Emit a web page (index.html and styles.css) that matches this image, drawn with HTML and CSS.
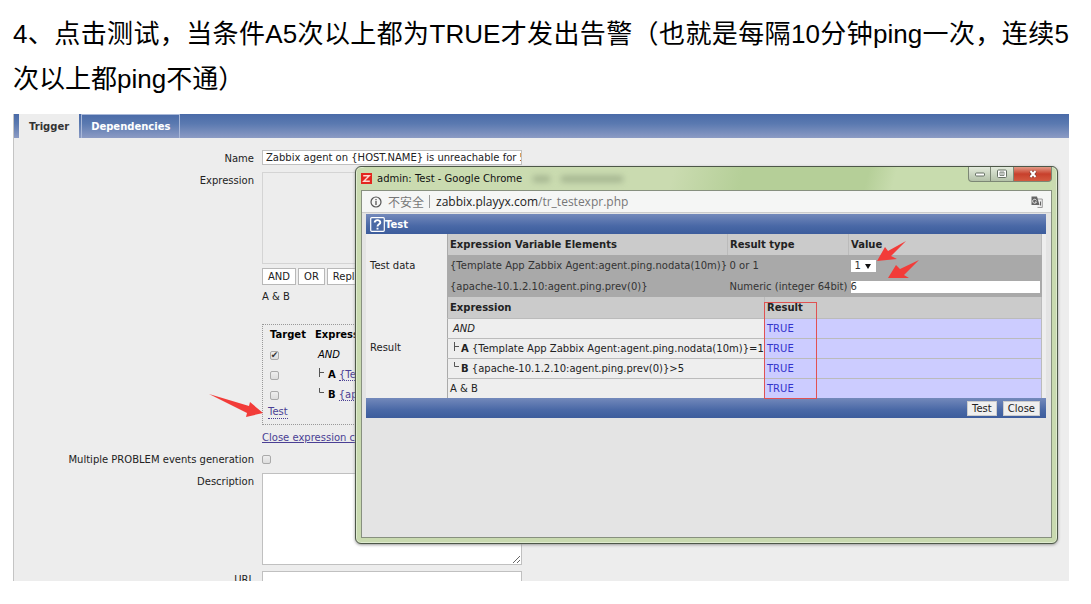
FILE: index.html
```html
<!DOCTYPE html>
<html lang="zh-CN">
<head>
<meta charset="utf-8">
<title>Zabbix 触发器测试</title>
<link rel="stylesheet" href="styles.css">
</head>
<body>
<main class="article">
  <p class="step">4、点击测试，当条件A5次以上都为TRUE才发出告警（也就是每隔10分钟ping一次，连续5次以上都ping不通）</p>
  <section class="shot">
    <nav class="tabs">
      <button class="tab tab-active" type="button">Trigger</button>
      <button class="tab" type="button">Dependencies</button>
    </nav>
    <form class="form">
      <div class="row">
        <label class="row-label" for="name">Name</label>
        <input class="field" id="name" type="text" value="Zabbix agent on {HOST.NAME} is unreachable for 5">
      </div>
      <div class="row">
        <label class="row-label" for="expression">Expression</label>
        <div class="stack">
          <textarea class="area area-readonly" id="expression" readonly></textarea>
          <div class="ops">
            <button class="op" type="button">AND</button>
            <button class="op" type="button">OR</button>
            <button class="op" type="button">Replace</button>
          </div>
          <div class="formula">A &amp; B</div>
          <div class="targets">
            <table class="target-table">
              <tr><th>Target</th><th>Expression</th></tr>
              <tr><td><input class="check" type="checkbox" aria-label="Target AND" checked></td><td><i>AND</i></td></tr>
              <tr><td><input class="check" type="checkbox" aria-label="Target A"></td><td><svg class="branch" viewBox="0 0 7 10"><path d="M1.5 0V9M1.5 4.500H6"/></svg><b>A</b> <a class="dotted" href="#">{Template</a></td></tr>
              <tr><td><input class="check" type="checkbox" aria-label="Target B"></td><td><svg class="branch" viewBox="0 0 7 10"><path d="M1.500 0V4.500H6"/></svg><b>B</b> <a class="dotted" href="#">{apache</a></td></tr>
            </table>
            <a class="dotted test-link" href="#">Test</a>
          </div>
          <a class="close-link" href="#">Close expression constructor</a>
        </div>
      </div>
      <div class="row">
        <label class="row-label" for="multi">Multiple PROBLEM events generation</label>
        <input class="check" id="multi" type="checkbox">
      </div>
      <div class="row">
        <label class="row-label" for="description">Description</label>
        <textarea class="area" id="description"></textarea>
      </div>
      <div class="row row-cut">
        <label class="row-label" for="url">URL</label>
        <input class="field" id="url" type="text">
      </div>
    </form>

    <section class="window" aria-label="admin: Test - Google Chrome">
      <header class="titlebar">
        <svg class="favicon" viewBox="0 0 10 10"><rect width="10" height="10" fill="#e3271f"/><path d="M2 2.500H7.500L2.500 7.500H8" fill="none" stroke="#ffd9d2" stroke-width="1.300"/></svg>
        <span class="title">admin: Test - Google Chrome</span>
        <span class="ghost ghost-short"></span><span class="ghost"></span>
        <div class="controls">
          <button class="control" type="button" aria-label="Minimize"><svg viewBox="0 0 12 10"><rect x="1.500" y="4" width="9" height="3" rx="1" fill="#fff" stroke="#667064"/></svg></button>
          <button class="control" type="button" aria-label="Maximize"><svg viewBox="0 0 12 10"><rect x="1.500" y="1" width="9" height="7.500" rx="1" fill="#fff" stroke="#667064"/><path d="M4 6.500V3H8V6.500ZM6 3V6" fill="none" stroke="#667064" stroke-width=".8"/></svg></button>
          <button class="control control-close" type="button" aria-label="Close window"><svg viewBox="0 0 12 10"><path d="M3.500 2 8.500 8M8.500 2 3.500 8" stroke="#7a3830" stroke-width="3.500"/><path d="M3.500 2 8.500 8M8.500 2 3.500 8" stroke="#fff" stroke-width="2"/></svg></button>
        </div>
      </header>
      <div class="viewport">
        <div class="address">
          <svg class="info" viewBox="0 0 12 12"><circle cx="6" cy="6" r="5" fill="none" stroke="#555" stroke-width="1.200"/><path d="M6 5V9M6 3V4.200" stroke="#555" stroke-width="1.300"/></svg>
          <span class="unsafe">不安全</span>
          <span class="address-text">zabbix.playyx.com<span class="path">/tr_testexpr.php</span></span>
          <svg class="translate" viewBox="0 0 12 12"><path d="M4 3H11.300V11.500H6.500" fill="#eee" stroke="#888" stroke-width=".8"/><path d="M0.500 0.500H6L8.500 9H0.500Z" fill="#666"/><path d="M5.500 4.500A2 2 0 1 0 5.500 6H4" fill="none" stroke="#eee" stroke-width=".9"/><path d="M9.500 5.500V9.500" stroke="#666" stroke-width="1" fill="none"/></svg>
        </div>
        <div class="page">
          <div class="bar"><svg class="help" viewBox="0 0 15 15"><rect x=".7" y=".7" width="13.600" height="13.600" rx="1" fill="#4a69a5" stroke="#fff" stroke-width="1.200"/><path d="M4.700 5.600C4.700 2.400 10.300 2.400 10.300 5.400C10.300 7.400 7.500 7.300 7.500 9.500M7.500 10.700V12.500" fill="none" stroke="#fff" stroke-width="1.900"/></svg>Test</div>
          <div class="panel">
            <div class="panel-row">
              <div class="panel-label">Test data</div>
              <table class="grid">
                <colgroup><col class="col-element"><col class="col-type"><col></colgroup>
                <tr><th>Expression Variable Elements</th><th>Result type</th><th>Value</th></tr>
                <tr class="dark"><td>{Template App Zabbix Agent:agent.ping.nodata(10m)}</td><td>0 or 1</td><td><div class="picker"><select class="select" aria-label="Value of nodata"><option>1</option><option>0</option></select></div></td></tr>
                <tr class="dark"><td>{apache-10.1.2.10:agent.ping.prev(0)}</td><td>Numeric (integer 64bit)</td><td><input class="value" type="text" value="6" aria-label="Value of prev"></td></tr>
              </table>
            </div>
            <div class="panel-row">
              <div class="panel-label">Result</div>
              <table class="grid results">
                <colgroup><col class="col-expression"><col></colgroup>
                <tr><th>Expression</th><th>Result</th></tr>
                <tr><td><i class="indent">AND</i></td><td class="true">TRUE</td></tr>
                <tr><td><svg class="branch" viewBox="0 0 7 10"><path d="M1.500 0V9M1.500 4.500H6"/></svg><b>A</b> {Template App Zabbix Agent:agent.ping.nodata(10m)}=1</td><td class="true">TRUE</td></tr>
                <tr><td><svg class="branch" viewBox="0 0 7 10"><path d="M1.500 0V4.500H6"/></svg><b>B</b> {apache-10.1.2.10:agent.ping.prev(0)}&gt;5</td><td class="true">TRUE</td></tr>
                <tr><td>A &amp; B</td><td class="true">TRUE</td></tr>
              </table>
            </div>
          </div>
          <div class="bar bar-foot">
            <button class="action" type="button">Test</button>
            <button class="action" type="button">Close</button>
          </div>
        </div>
      </div>
    </section>

    <svg class="marks" viewBox="0 0 1056 468" width="1056" height="468" aria-hidden="true">
      <g fill="#f23c39">
        <path d="M195 280 235 292 236 288 249 299 232 303 233 299Z"/>
        <path d="M892 127 877 142 883 145 863 147 871 133 874 137Z"/>
        <path d="M905 146 890 161 895 164 874 164 882 151 886 155Z"/>
      </g>
      <rect x="750.500" y="188.500" width="52" height="96" fill="none" stroke="#e05252"/>
    </svg>
  </section>
</main>
</body>
</html>
```
FILE: styles.css
```css
* { box-sizing: border-box; }

body {
  margin: 0;
  background: #fff;
  color: #222;
  font-family: "DejaVu Sans", "Noto Sans CJK SC", sans-serif;
  font-size: 10px;
}

button, input, select, textarea { font: inherit; color: inherit; margin: 0; }

.article { padding: 12px 22px 22px 13px; }

.step {
  margin: 0 0 12px;
  color: #000;
  font: 26px/45px "Liberation Sans", "Noto Sans CJK SC", sans-serif;
  text-align: justify;
}

.shot {
  position: relative;
  overflow: hidden;
  background: #ededed;
  border-left: 1px solid #c4c4c4;
}

.tabs {
  display: flex;
  height: 24px;
  padding-left: 5px;
  background: linear-gradient(#4a6ba8, #5a79b0 40%, #8c9bc4);
}
.tab {
  padding: 0 9px;
  border: 1px solid #a9b8d8;
  border-width: 1px 1px 0;
  background: none;
  color: #fff;
  font-weight: bold;
}
.tab-active {
  margin-right: 2px;
  background: #ededed;
  border-color: #ededed;
  color: #333;
}

.form { display: flex; flex-direction: column; gap: 6px; padding-top: 12px; }
.row { display: grid; grid-template-columns: 240px 260px; column-gap: 8px; }
.row-label { padding-top: 2px; text-align: right; line-height: 14px; }
.field, .area {
  width: 100%;
  border: 1px solid #c0c0c0;
  border-radius: 0;
  background: #fff;
  outline: none;
}
.field { height: 15px; padding: 0 0 0 3px; }
.area { display: block; height: 92px; padding: 2px; }
.area-readonly { background: #ededed; border-color: #d4d4d4; resize: none; }
.row-cut { height: 10px; overflow: hidden; }
.stack { display: flex; flex-direction: column; }
.ops { display: flex; gap: 2px; margin-top: 4px; }
.op {
  height: 17px;
  padding: 0 5px;
  border: 1px solid #b8b8b8;
  background: #fff;
}
.formula { margin-top: 5px; line-height: 14px; }
.targets {
  margin-top: 20px;
  padding: 0 5px 5px;
  border: 1px dotted #999;
  line-height: 14px;
}
.target-table { border-collapse: collapse; color: #000; }
.target-table th, .target-table td { height: 20px; padding: 0 10px 0 2px; text-align: left; white-space: nowrap; }
.target-table th { padding-right: 7px; }
.target-table i { padding-left: 3px; }
.target-table .branch { margin-right: 3px; }
.check {
  appearance: none;
  width: 9px;
  height: 9px;
  border: 1px solid #aaa;
  border-radius: 2px;
  background: linear-gradient(#eee, #ddd);
  display: grid;
  place-content: center;
}
.row > .check { align-self: center; }
.check:checked::before { content: "✔"; color: #333; font-size: 9px; line-height: 9px; }
a { color: #4a3f94; }
.dotted { text-decoration: none; border-bottom: 1px dotted #4a3f94; }
.test-link { display: inline-block; line-height: 12px; }
.close-link { margin-top: 6px; line-height: 14px; white-space: nowrap; }
.branch { width: 7px; height: 10px; margin-left: 3px; margin-right: 1px; vertical-align: 0; fill: none; stroke: #555; stroke-width: 1; }

.window {
  position: absolute;
  inset: 52px 11px 37px 341px;
  display: flex;
  flex-direction: column;
  padding: 0 5px 5px;
  border: 1px solid #4d5748;
  border-radius: 6px;
  background: #c9dab0;
  box-shadow: inset 0 0 0 1px #dfebcf, 0 1px 3px #999;
}
.titlebar {
  display: flex;
  align-items: center;
  height: 23px;
  gap: 5px;
  background: linear-gradient(105deg, #cadbb0 0 45%, #b5cf98 55% 73%, #c8dcae 77%);
  border-radius: 5px 5px 0 0;
}
.favicon { width: 11px; height: 11px; }
.title { color: #111; }
.ghost { width: 62px; height: 6px; background: #849475; filter: blur(3px); opacity: .6; }
.ghost-short { width: 17px; margin: 0 6px; }
.controls { display: flex; align-self: flex-start; margin-left: auto; }
.control {
  width: 23px;
  height: 15px;
  padding: 0;
  border: 1px solid #7c8775;
  border-top: 0;
  border-left-width: 0;
  background: linear-gradient(#e2eadb, #b4c2a9);
  line-height: 0;
}
.control:first-child { border-left-width: 1px; border-radius: 0 0 0 4px; }
.control svg { width: 12px; height: 10px; }
.control-close { width: 38px; background: linear-gradient(#e39a86, #c8402c 50%, #d35a40); border-radius: 0 0 4px 0; }

.viewport { flex: 1; border: 1px solid #87907f; background: #e4e4e4; }
.address {
  display: flex;
  align-items: center;
  height: 22px;
  padding: 0 8px;
  background: #f5f6f5;
  border-bottom: 1px solid #ccc;
}
.info { width: 12px; height: 12px; }
.unsafe { margin-left: 6px; padding-right: 5px; border-right: 1px solid #999; color: #777; font: 12px/13px "Noto Sans CJK SC", sans-serif; }
.address-text { margin-left: 6px; color: #222; font: 12px "Open Sans", sans-serif; }
.path { color: #777; }
.translate { width: 12px; height: 12px; margin-left: auto; }

.page { padding: 1px 5px 0 4px; }
.bar {
  display: flex;
  align-items: center;
  height: 20px;
  padding: 0 4px;
  background: linear-gradient(#7389bb, #4968a6 60%, #3c5c9c);
  color: #fff;
  font-weight: bold;
}
.help { width: 15px; height: 15px; }
.panel { padding-right: 4px; background: #eee; }
.panel-row { display: grid; grid-template-columns: 81px 1fr; }
.panel-label { align-self: center; padding-left: 4px; }
.grid { width: 100%; table-layout: fixed; border-collapse: collapse; border-left: 1px solid #aaa; }
.col-element { width: 280px; }
.col-type { width: 121px; }
.col-expression { width: 317px; }
.grid th, .grid td { height: 21px; padding: 0 2px; text-align: left; white-space: nowrap; }
.grid th { background: #cbcbcb; border-right: 1px solid #bbb; }
.grid .dark { background: #a9a9a9; color: #333; }
.results td { height: 20px; border-top: 1px solid #bbb; border-right: 1px solid #bbb; }
.results .true { background: #ccf; color: #33c; }
.indent { padding-left: 3px; }
.picker { position: relative; width: 25px; height: 12px; }
.picker::after {
  content: "";
  position: absolute;
  right: 5px;
  top: 4px;
  border: 3px solid transparent;
  border-top: 5px solid #111;
  border-bottom: 0;
  pointer-events: none;
}
.select { display: block; appearance: none; width: 25px; height: 12px; padding: 0 4px; border: 0; border-radius: 0; background: #fff; line-height: 12px; }
.value { display: block; width: 100%; height: 12px; padding: 0; border: 0; background: #fff; }
.bar-foot { justify-content: flex-end; gap: 6px; padding-right: 6px; }
.action { height: 15px; padding: 0 4px; border: 1px solid #ccc; background: #efefef; color: #222; font-weight: normal; }

.marks { position: absolute; left: 0; top: 0; pointer-events: none; }
```
